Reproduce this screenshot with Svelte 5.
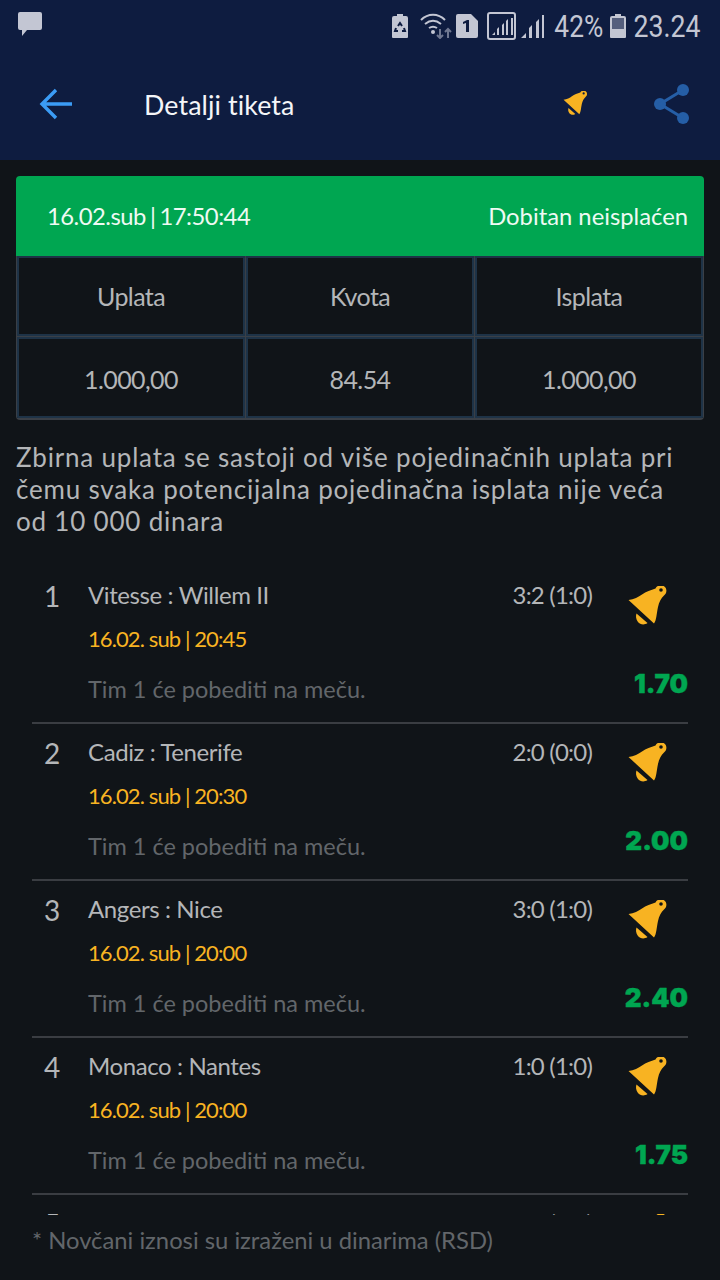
<script lang="ts">
  const matches = [
    { no: 1, name: "Vitesse : Willem II", score: "3:2 (1:0)", time: "16.02. sub | 20:45", odd: "1.70" },
    { no: 2, name: "Cadiz : Tenerife", score: "2:0 (0:0)", time: "16.02. sub | 20:30", odd: "2.00" },
    { no: 3, name: "Angers : Nice", score: "3:0 (1:0)", time: "16.02. sub | 20:00", odd: "2.40" },
    { no: 4, name: "Monaco : Nantes", score: "1:0 (1:0)", time: "16.02. sub | 20:00", odd: "1.75" },
    { no: 5, name: "Hamburg : Fortuna S", score: "2:0 (1:0)", time: "16.02. sub | 20:30", odd: "1.60" }
  ];
  const bellBody = "M18.500 25C24 24.500 28.500 22 32 19.500C36 16.500 41 15 45.500 13.500C47 9.500 54 9 56 13.500C57 16.500 56 19 54 20.500C51 23.500 49 27 48 32C46.500 39 46.500 45 44 48.500Z";
  const bellClapper = "M26.500 38.500L37.500 48C34 50.500 30 49.500 28 47C26 44.500 25.500 41 26.500 38.500Z";
</script>

<div class="screen">
  <header class="top">
    <div class="status">
      <svg width="26" height="26" viewBox="0 0 26 26"><path fill="#c3c6d3" d="M2 0h20a2 2 0 0 1 2 2v14a2 2 0 0 1-2 2H9l-5 6v-6H2a2 2 0 0 1-2-2V2a2 2 0 0 1 2-2z"/></svg>
      <div class="status-right">
        <svg class="i-batt" width="16" height="24" viewBox="0 0 16 24"><path fill="#c3c6d3" d="M5 0h6v2h3a2 2 0 0 1 2 2v19a1 1 0 0 1-1 1H1a1 1 0 0 1-1-1V4a2 2 0 0 1 2-2h3z"/><path fill="none" stroke="#0e1c40" stroke-width="2" d="M6 12l2-3 2 3M12 14l1 3h-3M6 17H3l1-3"/></svg>
        <svg class="i-wifi" width="32" height="26" viewBox="0 0 32 26"><path fill="none" stroke="#c3c6d3" stroke-width="2" d="M1 7c7-7 17-7 24 0M5 11c5-4 11-4 16 0M9 15c3-2 5-2 8 0"/><circle cx="13" cy="19" r="2" fill="#c3c6d3"/><path fill="none" stroke="#6f7790" stroke-width="2" d="M20 16v9m-3-3l3 3 3-3M28 25v-9m-3 3l3-3 3 3"/></svg>
        <svg class="i-sim" width="22" height="24" viewBox="0 0 22 24"><path fill="#c3c6d3" d="M2 0h13l7 7v15a2 2 0 0 1-2 2H2a2 2 0 0 1-2-2V2a2 2 0 0 1 2-2z"/><path fill="#0e1c40" d="M7 8l4-2h2v12h-3V9l-3 1z"/></svg>
        <svg class="i-sig" width="29" height="28" viewBox="0 0 29 28"><rect x="1" y="1" width="27" height="26" rx="2" fill="none" stroke="#c3c6d3" stroke-width="2"/><path fill="#c3c6d3" d="M5 23l3-3v3zM10 23v-6l2-2v8zM15 23V13l2-2v12zM19 23V9l2-2v16zM24 23V6h2v17z"/></svg>
        <svg class="i-sig2" width="24" height="24" viewBox="0 0 24 24"><path fill="#c3c6d3" d="M0 24l5-5v5zM8 24V14l3-3v13zM15 24V8l3-3v19zM21 24V1h2v23z"/></svg>
        <span class="pct">42%</span>
        <svg class="i-batt2" width="16" height="24" viewBox="0 0 16 24"><path fill="#c3c6d3" d="M5 0h6v2h3a2 2 0 0 1 2 2v19a1 1 0 0 1-1 1H1a1 1 0 0 1-1-1V4a2 2 0 0 1 2-2h3z"/><rect x="2" y="4" width="12" height="11" fill="#545e7d"/></svg>
        <span class="clock">23.24</span>
      </div>
    </div>
    <div class="bar">
      <svg class="back" width="34" height="34" viewBox="0 0 34 34"><path fill="none" stroke="#3b9cf6" stroke-width="3.400" d="M33 17H4M17 3L3 17l14 14"/></svg>
      <h1>Detalji tiketa</h1>
      <svg class="bell-small" width="26" height="26" viewBox="16 11 42 42"><path fill="#f8b322" d={bellBody}/><path fill="#f8b322" d={bellClapper}/><circle cx="51" cy="15" r="1.800" fill="#0e1c40"/></svg>
      <svg class="share" width="36" height="40" viewBox="0 0 36 40"><g fill="#255ea6"><circle cx="29" cy="6" r="6"/><circle cx="6" cy="20" r="6"/><circle cx="29" cy="34" r="6"/></g><path fill="none" stroke="#255ea6" stroke-width="3" d="M29 6L6 20l23 14"/></svg>
    </div>
  </header>

  <main class="content">
    <section class="card">
      <div class="card-head">
        <span class="date">16.02.sub | 17:50:44</span>
        <span class="state">Dobitan neisplaćen</span>
      </div>
      <div class="cells">
        <div class="cell">Uplata</div>
        <div class="cell">Kvota</div>
        <div class="cell">Isplata</div>
        <div class="cell low">1.000,00</div>
        <div class="cell low">84.54</div>
        <div class="cell low">1.000,00</div>
      </div>
    </section>

    <p class="note">Zbirna uplata se sastoji od više pojedinačnih uplata pri čemu svaka potencijalna pojedinačna isplata nije veća od 10 000 dinara</p>

    <div class="list">
      {#each matches as m (m.no)}
        <article class="match">
          <div class="no">{m.no}</div>
          <div class="info">
            <div class="line1">
              <span class="name">{m.name}</span>
              <span class="score">{m.score}</span>
            </div>
            <div class="time">{m.time}</div>
            <div class="tip">Tim 1 će pobediti na meču.</div>
          </div>
          <div class="side">
            <svg width="42" height="42" viewBox="16 11 42 42"><path fill="#f8b322" d={bellBody}/><path fill="#f8b322" d={bellClapper}/><circle cx="51" cy="15" r="1.800" fill="#101418"/></svg>
            <div class="odd">{m.odd}</div>
          </div>
        </article>
      {/each}
    </div>

    <p class="foot">* Novčani iznosi su izraženi u dinarima (RSD)</p>
  </main>
</div>

<style>
  :global(body) {
    margin: 0;
    background: #101418;
  }

  .screen {
    width: 720px;
    height: 1280px;
    overflow: hidden;
    display: flex;
    flex-direction: column;
    font-family: Lato, "Open Sans", sans-serif;
    background: #101418;
  }

  .top {
    background: #0e1c40;
    height: 160px;
    flex: none;
  }

  .status {
    height: 50px;
    display: flex;
    align-items: flex-start;
    justify-content: space-between;
    padding: 12px 20px 0 18px;
    box-sizing: border-box;
  }

  .status-right {
    display: flex;
    align-items: center;
    height: 28px;
    color: #c3c6d3;
  }

  .i-wifi { margin-left: 12px; }
  .i-sim { margin-left: 4px; }
  .i-sig { margin-left: 9px; }
  .i-sig2 { margin-left: 5px; }
  .i-batt2 { margin-left: 2.300px; }

  .pct,
  .clock {
    font-family: Roboto, sans-serif;
    font-size: 31px;
  }

  .pct {
    margin-left: 4.700px;
    transform: scaleX(0.85);
  }

  .clock {
    margin: 0 -6.200px 0 2.700px;
    transform: scaleX(0.86);
  }

  .bar {
    height: 110px;
    display: flex;
    align-items: center;
    box-sizing: border-box;
  }

  .back {
    margin: -2px 0 0 39px;
  }

  h1 {
    margin: 0 0 0 71px;
    flex: 1;
    font-size: 26.800px;
    letter-spacing: 0.1px;
    font-weight: 400;
    color: #f4f5f8;
  }

  .bell-small {
    margin: -2px 66px 0 0;
  }

  .share {
    margin: -2px 30px 0 0;
  }

  .content {
    position: relative;
    flex: 1;
    min-height: 0;
    padding: 16px 16px 0;
    display: flex;
    flex-direction: column;
  }

  .card {
    flex: none;
    border-radius: 4px;
    overflow: hidden;
    border-bottom: 2px solid #3a3f46;
  }

  .card-head {
    height: 80px;
    background: #00a651;
    color: #eefaf3;
    font-size: 23.800px;
    display: flex;
    align-items: center;
    justify-content: space-between;
    padding: 0 16px 0 31px;
  }

  .date {
    letter-spacing: -0.5px;
    word-spacing: -1.500px;
  }

  .cells {
    display: grid;
    grid-template-columns: repeat(3, 1fr);
    grid-template-rows: 80px 81px;
    gap: 1px;
    color: #b4b6b8;
    font-size: 25px;
    letter-spacing: -0.6px;
    border-left: 1px solid #3a3f46;
    border-right: 1px solid #3a3f46;
    background: #3a3f46;
  }

  .cell {
    background: #101418;
    border: 2px solid #1e3347;
    display: flex;
    align-items: center;
    justify-content: center;
  }

  .low {
    padding-top: 2px;
  }

  .note {
    flex: none;
    margin: 21px 8px 0 0;
    font-size: 26px;
    letter-spacing: 0.8px;
    line-height: 32px;
    color: #b4b6b8;
  }

  .list {
    flex: 1;
    min-height: 0;
    overflow: hidden;
    padding: 30px 16px 0;
  }

  .match {
    height: 157px;
    box-sizing: border-box;
    border-bottom: 2px solid #3a3d42;
    display: flex;
  }

  .no {
    width: 56px;
    padding: 12px 16px 0 0;
    box-sizing: border-box;
    text-align: center;
    font-size: 28px;
    color: #b4b6b8;
  }

  .info {
    flex: 1;
    min-width: 0;
  }

  .line1 {
    display: flex;
    justify-content: space-between;
    padding-top: 13px;
    font-size: 24px;
    letter-spacing: -0.4px;
    color: #b4b6b8;
  }

  .score {
    letter-spacing: -0.8px;
  }

  .time {
    margin-top: 16px;
    font-size: 22px;
    letter-spacing: -0.9px;
    color: #f8b322;
  }

  .tip {
    margin-top: 23px;
    font-size: 23.500px;
    color: #62666a;
  }

  .side {
    width: 96px;
    flex: none;
    display: flex;
    flex-direction: column;
    align-items: flex-end;
  }

  .side svg {
    margin: 19px 20px 0 0;
  }

  .odd {
    margin-top: 41px;
    font-family: Inter, Lato, sans-serif;
    font-size: 26px;
    line-height: 30px;
    font-weight: 900;
    -webkit-text-stroke: 0.4px #00a651;
    color: #00a651;
  }

  .foot {
    flex: none;
    height: 65px;
    margin: 0;
    padding: 11px 16px 0;
    box-sizing: border-box;
    font-size: 23.800px;
    color: #62666a;
    background: #101418;
  }
</style>
